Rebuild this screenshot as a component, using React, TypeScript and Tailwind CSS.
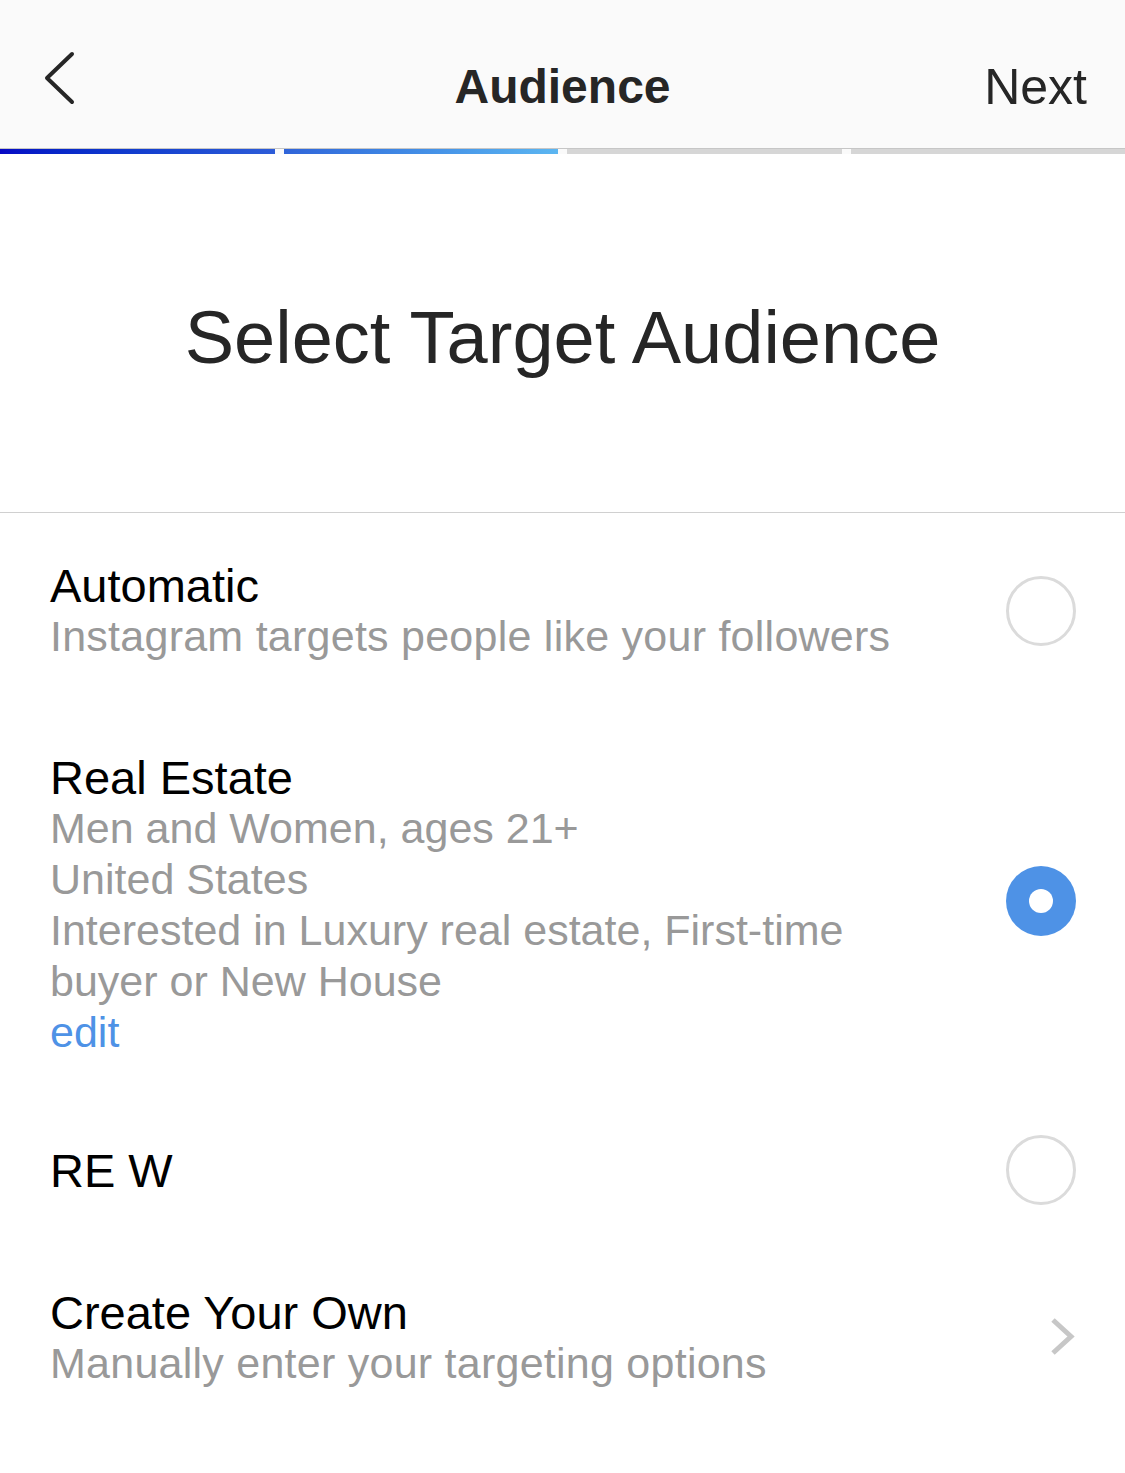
import React, { useState } from 'react';

const font = { fontFamily: '"Liberation Sans", Arial, sans-serif' };

const Radio = ({ checked, onClick }: { checked: boolean; onClick: () => void }) => (
  <button
    onClick={onClick}
    className={`shrink-0 w-[70px] h-[70px] rounded-full flex items-center justify-center ${
      checked ? 'bg-[#4e92e6]' : 'border-[3px] border-[#dbdbdb] bg-white'
    }`}
  >
    {checked && <span className="w-[24px] h-[24px] rounded-full bg-white" />}
  </button>
);

const App = () => {
  const [selected, setSelected] = useState('real');

  return (
    <div className="w-[1125px] min-h-[1473px] bg-white text-black" style={font}>
      {/* Top bar */}
      <div className="h-[149px] bg-[#fafafa] border-b border-[#c6c6c6] pt-[26px] grid grid-cols-[1fr_auto_1fr] items-center">
        <div className="flex items-center">
          <svg width="32" height="54" viewBox="0 0 32 54" className="ml-[44px] mb-[19px]">
            <path d="M28 3 L3 27 L28 51" fill="none" stroke="#262626" strokeWidth="4" strokeLinecap="round" strokeLinejoin="round" />
          </svg>
        </div>
        <div className="text-[48px] leading-none font-bold text-[#262626]">Audience</div>
        <div className="flex justify-end pr-[38px]">
          <span className="text-[50px] leading-none text-[#262626]">Next</span>
        </div>
      </div>

      {/* Progress */}
      <div className="h-[5px] bg-[#fafafa] flex gap-[9px]">
        <div className="flex-1 bg-gradient-to-r from-[#0707c4] to-[#2d5cd8]" />
        <div className="flex-1 bg-gradient-to-r from-[#3064d9] to-[#5cb6f1]" />
        <div className="flex-1 bg-[#d6d6d6]" />
        <div className="flex-1 bg-[#d6d6d6]" />
      </div>

      {/* Heading */}
      <div className="pt-[147px] pb-[137px] border-b border-[#d0d0d0] flex justify-center">
        <h1 className="text-[74px] leading-none text-[#262626]">Select Target Audience</h1>
      </div>

      {/* Options */}
      <div className="flex flex-col pr-[49px] pl-[50px]">
        <div className="pt-[47px] pb-[45px] flex items-center justify-between gap-[40px]">
          <div className="leading-[51px]">
            <div className="text-[47px]">Automatic</div>
            <div className="text-[43px] tracking-[0.25px] text-[#999999]">Instagram targets people like your followers</div>
          </div>
          <Radio checked={selected === 'auto'} onClick={() => setSelected('auto')} />
        </div>

        <div className="pt-[45px] pb-[43px] flex items-center justify-between gap-[40px]">
          <div className="leading-[51px]">
            <div className="text-[47px]">Real Estate</div>
            <div className="text-[43px] text-[#999999]">
              <div>Men and Women, ages 21+</div>
              <div>United States</div>
              <div>Interested in Luxury real estate, First-time</div>
              <div>buyer or New House</div>
            </div>
            <div className="text-[43px] text-[#4e92e6]">edit</div>
          </div>
          <div className="mb-[8px]">
            <Radio checked={selected === 'real'} onClick={() => setSelected('real')} />
          </div>
        </div>

        <div className="pt-[34px] pb-[36px] flex items-center justify-between gap-[40px]">
          <div className="leading-[51px] text-[47px]">RE W</div>
          <Radio checked={selected === 'rew'} onClick={() => setSelected('rew')} />
        </div>

        <div className="pt-[46px] pb-[45px] flex items-center justify-between gap-[40px]">
          <div className="leading-[51px]">
            <div className="text-[47px]">Create Your Own</div>
            <div className="text-[43px] tracking-[0.25px] text-[#999999]">Manually enter your targeting options</div>
          </div>
          <svg width="28" height="40" viewBox="0 0 28 40" className="mr-[-1px] mb-[2px]">
            <path d="M4 3 L22 19.5 L4 36" fill="none" stroke="#c7c7c7" strokeWidth="5" />
          </svg>
        </div>
      </div>
    </div>
  );
};

export default App;
